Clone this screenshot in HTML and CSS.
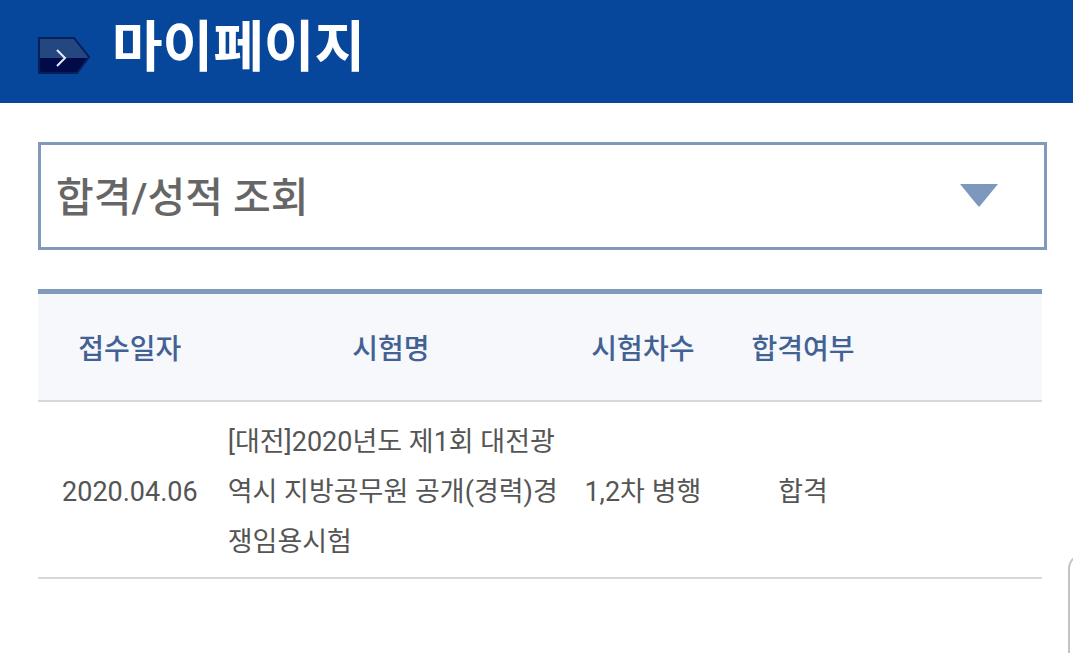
FILE: index.html
```html
<!DOCTYPE html>
<html lang="ko">
<head>
    <meta charset="UTF-8">
    <meta name="viewport" content="width=device-width, initial-scale=1.0">
    <title>마이페이지</title>
    <link rel="stylesheet" href="styles.css">
</head>
<body>
    <!-- Page title -->
    <header class="page-header">
        <svg class="title-icon" width="52" height="38" viewBox="0 0 52 38" aria-hidden="true">
            <path d="M1 1H36L51 20L39 36H1Z" fill="#24477f"/>
            <path d="M1 21H50L39 36H1Z" fill="#020b4a"/>
            <path d="M1 1H36L51 20L39 36H1Z" fill="none" stroke="#06205c" stroke-width="2"/>
            <path d="M19 13L27 21L19 29" fill="none" stroke="#e6ecf6" stroke-width="2"/>
        </svg>
        <h1>마이페이지</h1>
    </header>

    <main class="content">
        <!-- Menu select -->
        <div class="menu-select">
            <select aria-label="메뉴 선택">
                <option selected>합격/성적 조회</option>
            </select>
            <svg class="select-arrow" width="38" height="23" viewBox="0 0 38 23" aria-hidden="true">
                <path d="M0 0H38L20 22Q19 23 18 22Z" fill="#7e98bd"/>
            </svg>
        </div>

        <!-- Result list -->
        <table class="result-table">
            <colgroup>
                <col class="col-date">
                <col class="col-name">
                <col class="col-round">
                <col class="col-pass">
                <col>
            </colgroup>
            <thead>
                <tr>
                    <th scope="col">접수일자</th>
                    <th scope="col">시험명</th>
                    <th scope="col">시험차수</th>
                    <th scope="col">합격여부</th>
                    <td></td>
                </tr>
            </thead>
            <tbody>
                <tr>
                    <td>2020.04.06</td>
                    <td class="exam-name">[대전]2020년도 제1회 대전광역시 지방공무원 공개(경력)경쟁임용시험</td>
                    <td>1,2차 병행</td>
                    <td>합격</td>
                    <td></td>
                </tr>
            </tbody>
        </table>
    </main>

    <!-- Side tab -->
    <div class="side-tab"></div>
</body>
</html>
```

FILE: styles.css
```css
* {
    box-sizing: border-box;
}

body {
    margin: 0;
    font-family: Roboto, 'Noto Sans CJK KR', sans-serif;
    color: #555;
    background-color: #fff;
}

/* Page title */
.page-header {
    display: flex;
    align-items: center;
    gap: 22px;
    padding: 0 38px 10px;
    height: 103px;
    background-color: #06469b;
}

.title-icon {
    flex: none;
    margin-top: 18px;
}

.page-header h1 {
    margin: 0;
    font-size: 55px;
    font-weight: 700;
    line-height: 80px;
    color: #fff;
}

.content {
    padding: 39px 26px 40px 38px;
}

/* Menu select */
.menu-select {
    position: relative;
}

.menu-select select {
    display: block;
    width: 100%;
    height: 108px;
    padding: 3px 80px 0 15px;
    border: 3px solid #8199bb;
    border-radius: 0;
    background-color: #fff;
    font-family: inherit;
    font-size: 41px;
    font-weight: 500;
    color: #666;
    appearance: none;
}

.select-arrow {
    position: absolute;
    top: 42px;
    right: 49px;
    pointer-events: none;
}

/* Result list */
.result-table {
    width: calc(100% - 5px);
    margin-top: 39px;
    border-collapse: separate;
    border-spacing: 0;
    border-top: 5px solid #8199bb;
    table-layout: fixed;
    font-size: 27px;
    line-height: 50px;
    text-align: center;
}

.col-date {
    width: 18.3%;
}

.col-name {
    width: 33.7%;
}

.col-round {
    width: 16.5%;
}

.col-pass {
    width: 15.4%;
}

.result-table thead {
    background-color: #f6f8fb;
    color: #426294;
}

.result-table th,
.result-table td {
    border-bottom: 2px solid #d8d8d8;
}

.result-table th {
    padding: 31px 0 25px;
    font-size: 28px;
    font-weight: 500;
}

.result-table td {
    padding: 15px 0 10px;
}

.result-table .exam-name {
    padding-left: 6px;
    text-align: left;
    word-break: break-all;
}

/* Side tab, mostly tucked behind the window edge */
.side-tab {
    position: fixed;
    right: -55px;
    bottom: -20px;
    width: 60px;
    height: 120px;
    border: 2px solid #c4c4c4;
    border-radius: 16px;
    background-color: #fff;
}
```
